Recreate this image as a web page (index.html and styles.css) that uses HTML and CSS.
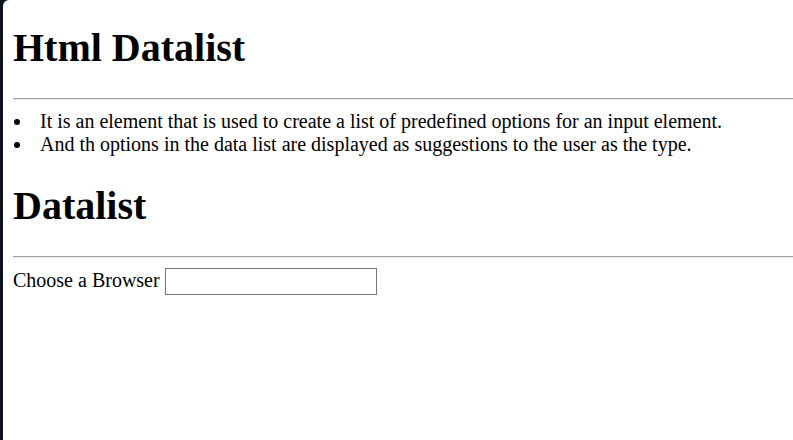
FILE: index.html
```html
<!DOCTYPE html>
<html>
<head>
<meta charset="utf-8">
<link rel="stylesheet" href="styles.css">
<title>Html Datalist</title>
</head>
<body>
<main class="page">
  <h1 class="title title-first">Html Datalist</h1>
  <hr class="rule">
  <ul class="points">
    <li class="point">It is an element that is used to create a list of predefined options for an input element.</li>
    <li class="point">And th options in the data list are displayed as suggestions to the user as the type.</li>
  </ul>
  <h1 class="title">Datalist</h1>
  <hr class="rule rule-low">
  <label class="field" for="browser">Choose a Browser <input class="field-input" id="browser" list="browsers"></label>
  <datalist id="browsers">
    <option value="Chrome"></option>
    <option value="Firefox"></option>
    <option value="Edge"></option>
    <option value="Safari"></option>
    <option value="Opera"></option>
  </datalist>
</main>
</body>
</html>
```
FILE: styles.css
```css
html, body {
  margin: 0;
  height: 100%;
}
body {
  background: #0d1321;
  overflow: hidden;
}
.page {
  display: flow-root;
  margin-left: 3px;
  min-height: 440px;
  background: #ffffff;
  border-top-left-radius: 6px;
  padding-left: 10px;
  font-family: "Liberation Serif", "Times New Roman", serif;
  font-size: 20px;
  color: #000;
}
.title {
  font-size: 40px;
  font-weight: 700;
  margin: 26.8px 0;
}
.title-first {
  margin-top: 23.8px;
}
.rule {
  margin: 10px 0;
  height: 0;
  border: none;
  border-top: 1px solid #a0a0a0;
  border-bottom: 1px solid #ededed;
}
.rule-low {
  margin-top: 27px;
}
.points {
  margin: 0;
  padding: 0;
  list-style: none;
}
.point {
  display: flex;
  align-items: baseline;
}
.point::before {
  content: "";
  flex: none;
  width: 6px;
  height: 6px;
  border-radius: 50%;
  background: #000;
  margin-left: 1px;
  margin-right: 20px;
  transform: translateY(-3px);
}
.field {
  display: block;
}
.field-input {
  box-sizing: border-box;
  width: 212px;
  height: 27px;
  margin: 0;
  padding: 1px 3px;
  border: 1px solid #767676;
  font-family: "Liberation Sans", Arial, sans-serif;
  font-size: 16.67px;
  vertical-align: baseline;
}
```
